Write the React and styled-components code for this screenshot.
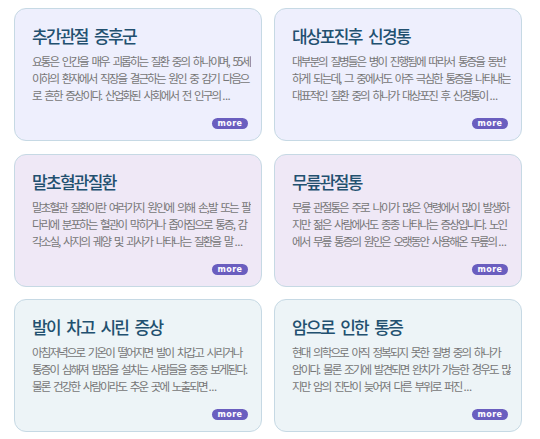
import React from "react";
import styled, { createGlobalStyle } from "styled-components";

const cards = [
  {
    title: "추간관절 증후군",
    text: "요통은 인간을 매우 괴롭히는 질환 중의 하나이며, 55세 이하의 환자에서 직장을 결근하는 원인 중 감기 다음으로 흔한 증상이다. 산업화된 사회에서 전 인구의",
    tone: "blue",
  },
  {
    title: "대상포진후 신경통",
    text: "대부분의 질병들은 병이 진행됨에 따라서 통증을 동반하게 되는데, 그 중에서도 아주 극심한 통증을 나타내는 대표적인 질환 중의 하나가 대상포진 후 신경통이",
    tone: "blue",
  },
  {
    title: "말초혈관질환",
    text: "말초혈관 질환이란 여러가지 원인에 의해 손,발 또는 팔다리에 분포하는 혈관이 막히거나 좁아짐으로 통증, 감각소실, 사지의 궤양 및 괴사가 나타나는 질환을 말",
    tone: "purple",
  },
  {
    title: "무릎관절통",
    text: "무릎 관절통은 주로 나이가 많은 연령에서 많이 발생하지만 젊은 사람에서도 종종 나타나는 증상입니다. 노인에서 무릎 통증의 원인은 오랫동안 사용해온 무릎의",
    tone: "purple",
  },
  {
    title: "발이 차고 시린 증상",
    text: "아침저녁으로 기온이 떨어지면 발이 차갑고 시리거나 통증이 심해져 밤잠을 설치는 사람들을 종종 보게된다. 물론 건강한 사람이라도 추운 곳에 노출되면",
    tone: "mint",
  },
  {
    title: "암으로 인한 통증",
    text: "현대 의학으로 아직 정복되지 못한 질병 중의 하나가 암이다. 물론 조기에 발견되면 완치가 가능한 경우도 많지만 암의 진단이 늦어져 다른 부위로 퍼진",
    tone: "mint",
  },
];

const tones = {
  blue: "#eeeffd",
  purple: "#efe8f6",
  mint: "#edf4f7",
};

const App = () => {
  return (
    <>
      <GlobalStyle />
      <Grid>
        {cards.map((card) => (
          <Card key={card.title} tone={card.tone}>
            <Title>{card.title}</Title>
            <Summary>
              {card.text}
              <Ellipsis>...</Ellipsis>
            </Summary>
            <Footer>
              <MoreButton>more</MoreButton>
            </Footer>
          </Card>
        ))}
      </Grid>
    </>
  );
};

export default App;

const GlobalStyle = createGlobalStyle`
  body {
    margin: 0;
    background: #ffffff;
    font-family: "Noto Sans CJK KR", "Noto Sans", sans-serif;
  }
`;

const Grid = styled.div`
  display: grid;
  grid-template-columns: 248px 248px;
  grid-auto-rows: 133px;
  column-gap: 12px;
  row-gap: 12.5px;
  padding: 8px 0 0 14px;
`;

const Card = styled.div`
  box-sizing: border-box;
  display: flex;
  flex-direction: column;
  background: ${(p) => tones[p.tone]};
  border: 1px solid #c6d9e4;
  border-radius: 12px;
  padding: 16px 10px 11px 17px;
  overflow: hidden;
`;

const Title = styled.h2`
  margin: 0;
  font-size: 17px;
  line-height: 22px;
  font-weight: 500;
  letter-spacing: -1.7px;
  word-spacing: 4.2px;
  color: #22506f;
`;

const Summary = styled.p`
  margin: 6px 0 0;
  font-size: 11.5px;
  line-height: 17px;
  letter-spacing: -1.88px;
  word-spacing: 2.9px;
  color: #767676;
  overflow: hidden;
`;

const Ellipsis = styled.span`
  letter-spacing: -0.5px;
  margin-left: 2px;
`;

const Footer = styled.div`
  margin-top: auto;
  display: flex;
  justify-content: flex-end;
  padding-right: 3px;
`;

const MoreButton = styled.button`
  width: 36px;
  height: 11px;
  padding: 0;
  border: none;
  border-radius: 6px;
  background: #6a5ebf;
  color: #ffffff;
  font-family: "DejaVu Sans", sans-serif;
  font-size: 8px;
  font-weight: bold;
  line-height: 11px;
  letter-spacing: 0.4px;
`;
